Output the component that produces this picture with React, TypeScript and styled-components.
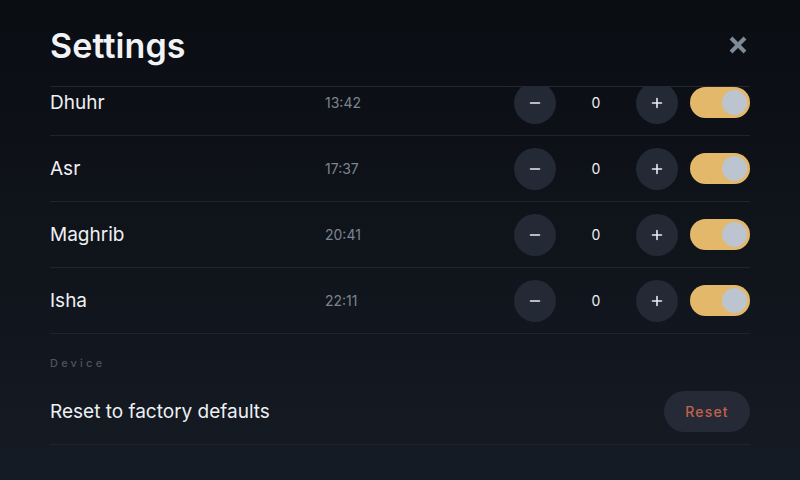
import React, { useLayoutEffect, useRef } from "react";
import styled, { createGlobalStyle } from "styled-components";

const Global = createGlobalStyle`
  html, body { margin: 0; padding: 0; height: 100%; }
  body {
    font-family: Inter, "Noto Sans", "Liberation Sans", sans-serif;
    background: #0b0e13;
    color: #eef0f3;
    -webkit-font-smoothing: antialiased;
  }
  #root { height: 100%; }
`;

const Screen = styled.div`
  width: 800px;
  height: 480px;
  display: flex;
  flex-direction: column;
  background: linear-gradient(180deg, #0a0d12 0%, #0f131a 45%, #151b24 100%);
  overflow: hidden;
`;

const Header = styled.header`
  flex: 0 0 auto;
  height: 86px;
  margin: 0 50px;
  display: flex;
  align-items: center;
  justify-content: space-between;
  border-bottom: 1px solid #232833;
  box-sizing: content-box;
`;

const Title = styled.h1`
  margin: 0;
  padding-top: 4px;
  font-size: 34px;
  font-weight: 600;
  color: #f1f3f6;
  letter-spacing: 0.1px;
`;

const CloseButton = styled.button`
  width: 28px;
  height: 28px;
  margin-right: -2px;
  margin-top: 4px;
  padding: 0;
  border: none;
  background: transparent;
  display: flex;
  align-items: center;
  justify-content: center;
  cursor: pointer;
`;

const Scroll = styled.div`
  position: relative;
  flex: 1 1 auto;
  overflow-y: auto;
  padding: 0 50px 40px;
  scrollbar-width: none;
  &::-webkit-scrollbar { display: none; }
`;

const SectionLabel = styled.div`
  padding: 23px 0 10px;
  font-size: 11px;
  font-weight: 500;
  letter-spacing: 3.2px;
  color: #4b5461;
  line-height: 12px;
`;

const Row = styled.div`
  height: 65px;
  display: flex;
  align-items: center;
  border-bottom: 1px solid #1f2430;
`;

const Name = styled.div`
  width: 275px;
  font-size: 19px;
  font-weight: 400;
  color: #eef0f3;
`;

const Time = styled.div`
  flex: 1;
  font-size: 14px;
  color: #7b8491;
`;

const Controls = styled.div`
  display: flex;
  align-items: center;
`;

const RoundButton = styled.button`
  width: 42px;
  height: 42px;
  border-radius: 50%;
  border: none;
  padding: 0;
  background: #232935;
  color: #e9ecf0;
  font-family: inherit;
  font-size: 18px;
  font-weight: 500;
  display: flex;
  align-items: center;
  justify-content: center;
  cursor: pointer;
`;

const Value = styled.div`
  width: 80px;
  text-align: center;
  font-size: 14px;
  color: #eef0f3;
`;

const Toggle = styled.div<{ $on: boolean }>`
  margin-left: 12px;
  width: 60px;
  height: 31px;
  border-radius: 16px;
  background: ${(p) => (p.$on ? "#e3b86a" : "#2a303c")};
  display: flex;
  align-items: center;
  justify-content: ${(p) => (p.$on ? "flex-end" : "flex-start")};
  padding: 0 3px;
  box-sizing: border-box;
`;

const Knob = styled.div`
  width: 25px;
  height: 25px;
  border-radius: 50%;
  background: #bcc4cf;
`;

const ResetButton = styled.button`
  margin-left: auto;
  width: 86px;
  height: 41px;
  border-radius: 21px;
  border: none;
  background: #252a36;
  color: #c2624e;
  font-family: inherit;
  font-size: 14px;
  font-weight: 500;
  letter-spacing: 1.2px;
  cursor: pointer;
`;

const ResetLabel = styled(Name)`
  width: auto;
`;

const Minus = () => (
  <svg width="12" height="12" viewBox="0 0 12 12">
    <path d="M1.5 6h9" stroke="#e9ecf0" strokeWidth="1.6" strokeLinecap="round" />
  </svg>
);
const Plus = () => (
  <svg width="12" height="12" viewBox="0 0 12 12">
    <path d="M1.5 6h9M6 1.5v9" stroke="#e9ecf0" strokeWidth="1.6" strokeLinecap="round" />
  </svg>
);

const prayers = [
  { name: "Fajr", time: "03:48" },
  { name: "Dhuhr", time: "13:42" },
  { name: "Asr", time: "17:37" },
  { name: "Maghrib", time: "20:41" },
  { name: "Isha", time: "22:11" },
];

export default function App() {
  const scrollRef = useRef<HTMLDivElement>(null);
  const targetRef = useRef<HTMLDivElement>(null);

  useLayoutEffect(() => {
    const s = scrollRef.current;
    const t = targetRef.current;
    if (s && t) s.scrollTop = t.offsetTop + 17;
  }, []);

  return (
    <>
      <Global />
      <Screen>
        <Header>
          <Title>Settings</Title>
          <CloseButton aria-label="Close">
            <svg width="20" height="20" viewBox="0 0 20 20">
              <path
                d="M3 3L17 17M17 3L3 17"
                stroke="#7f8a97"
                strokeWidth="4"
                strokeLinecap="butt"
              />
            </svg>
          </CloseButton>
        </Header>
        <Scroll ref={scrollRef}>
          <SectionLabel>Prayers</SectionLabel>
          {prayers.map((p) => (
            <Row key={p.name} ref={p.name === "Dhuhr" ? targetRef : undefined}>
              <Name>{p.name}</Name>
              <Time>{p.time}</Time>
              <Controls>
                <RoundButton aria-label="Decrease">
                  <Minus />
                </RoundButton>
                <Value>0</Value>
                <RoundButton aria-label="Increase">
                  <Plus />
                </RoundButton>
                <Toggle $on>
                  <Knob />
                </Toggle>
              </Controls>
            </Row>
          ))}
          <SectionLabel>Device</SectionLabel>
          <Row>
            <ResetLabel>Reset to factory defaults</ResetLabel>
            <ResetButton>Reset</ResetButton>
          </Row>
        </Scroll>
      </Screen>
    </>
  );
}
